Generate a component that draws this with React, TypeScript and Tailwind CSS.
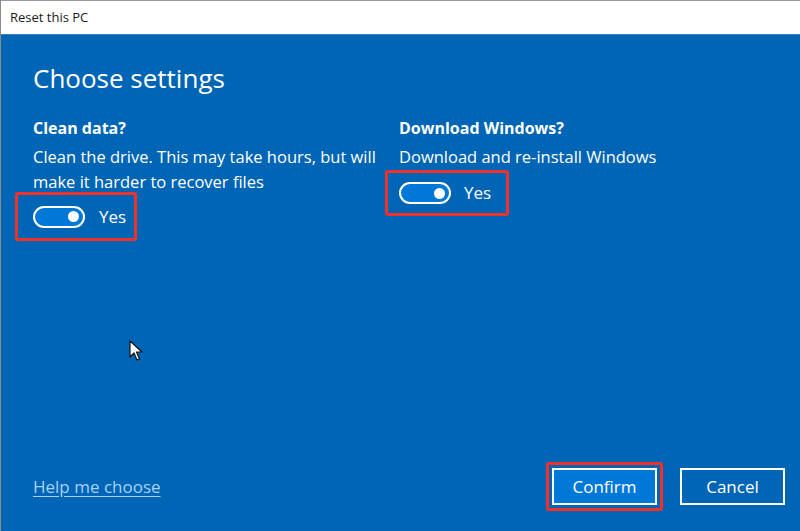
import React from 'react'

const font = { fontFamily: '"Open Sans", "Noto Sans", sans-serif' }

function Toggle() {
  return (
    <div className="w-[52px] h-[22px] rounded-full border-2 border-white bg-[#0078d7] flex items-center justify-end pr-[4px]">
      <div className="w-[11px] h-[11px] rounded-full bg-white" />
    </div>
  )
}

function Cursor() {
  return (
    <svg className="absolute left-[128px] top-[340px]" width="14" height="22" viewBox="0 0 14 22">
      <path d="M1 1 L1 17 L5 13 L8 20 L10.5 19 L7.5 12 L13 12 Z" fill="#fff" stroke="#111" strokeWidth="1.2" strokeLinejoin="round" />
    </svg>
  )
}

export default function App() {
  return (
    <div className="relative w-[800px] h-[531px] flex flex-col overflow-hidden border-l border-[#8a8a8a]" style={font}>
      <div className="h-[35px] shrink-0 bg-white border-t border-[#9a9a9a] border-b border-b-[#3a78c4] flex items-center pl-[9px]">
        <span className="text-[13px] text-[#1a1a1a]">Reset this PC</span>
      </div>

      <div className="flex-1 bg-[#0065b4] text-white flex flex-col px-[32px]">
        <h1 className="mt-[25px] text-[26px] leading-[36px] font-normal">Choose settings</h1>

        <div className="mt-[20px] flex">
          <div className="w-[366px]">
            <p className="text-[16px] leading-[24px] font-bold">Clean data?</p>
            <p className="mt-[4px] text-[16.5px] leading-[25px]">
              Clean the drive. This may take hours, but will<br />make it harder to recover files
            </p>
            <div className="-ml-[18px] -mt-[2px] w-[122px] h-[49px] border-[3px] border-[#f0312a] rounded-[3px] flex items-center pl-[15px] gap-[14px]">
              <Toggle />
              <span className="text-[17px]">Yes</span>
            </div>
          </div>
          <div>
            <p className="text-[16px] leading-[24px] font-bold">Download Windows?</p>
            <p className="mt-[4px] text-[16.5px] leading-[25px]">Download and re-install Windows</p>
            <div className="-ml-[14px] mt-[1px] w-[124px] h-[46px] border-[3px] border-[#f0312a] rounded-[3px] flex items-center pl-[11px] gap-[13px]">
              <Toggle />
              <span className="text-[17px]">Yes</span>
            </div>
          </div>
        </div>

        <div className="flex-1" />

        <div className="flex items-center mb-[20px] -mr-[17px]">
          <a className="text-[17px] text-[#a6d3f7] underline underline-offset-[3px]">Help me choose</a>
          <div className="flex-1" />
          <div className="p-[3px] border-[3px] border-[#f0312a] rounded-[3px] -mr-[3px]">
            <button className="w-[105px] h-[37px] border-2 border-white bg-[#0078d7] text-[17px] text-white">Confirm</button>
          </div>
          <button className="ml-[20px] w-[105px] h-[37px] border-2 border-white text-[17px] text-white">Cancel</button>
        </div>
      </div>

      <Cursor />
    </div>
  )
}
